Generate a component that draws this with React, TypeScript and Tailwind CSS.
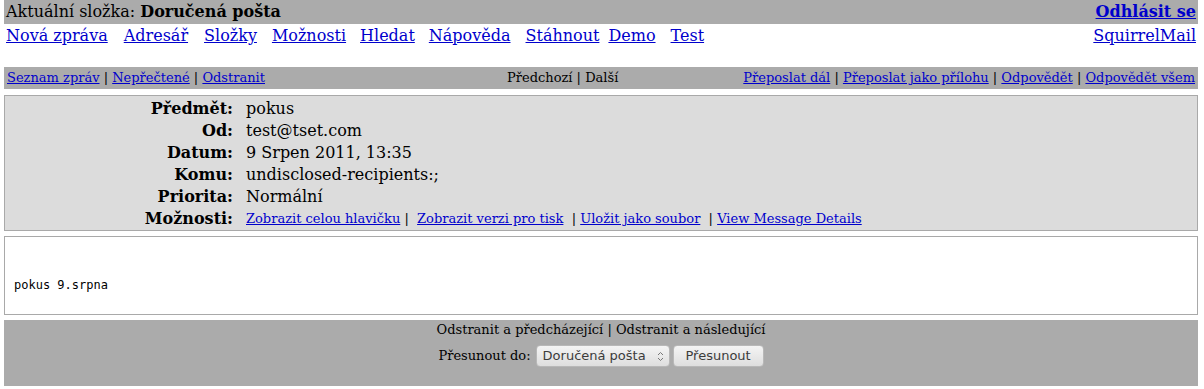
import React from 'react';

const link = 'text-[#0000cc] underline';

const topLinks: [string, string][] = [
  ['Nová zpráva', 'mr-[16px]'],
  ['Adresář', 'mr-[16px]'],
  ['Složky', 'mr-[15px]'],
  ['Možnosti', 'mr-[14px]'],
  ['Hledat', 'mr-[14px]'],
  ['Nápověda', 'mr-[15px]'],
  ['Stáhnout', 'mr-[9px]'],
  ['Demo', 'mr-[15px]'],
  ['Test', ''],
];

const headers: [string, string][] = [
  ['Předmět:', 'pokus'],
  ['Od:', 'test@tset.com'],
  ['Datum:', '9 Srpen 2011, 13:35'],
  ['Komu:', 'undisclosed-recipients:;'],
  ['Priorita:', 'Normální'],
];

function Sep({ text = ' | ' }: { text?: string }) {
  return <span className="whitespace-pre">{text}</span>;
}

export default function App() {
  return (
    <div className="w-[1204px] h-[389px] bg-white font-['DejaVu_Serif',serif] text-black">
      <div className="pl-[4px] w-[1198px]">
        {/* current folder bar */}
        <div className="flex h-[24px] items-center justify-between bg-[#ababab] px-[2px] text-[16px]">
          <span>
            Aktuální složka: <b>Doručená pošta</b>
          </span>
          <a className={`${link} font-bold`}>Odhlásit se</a>
        </div>

        {/* main menu */}
        <div className="flex h-[43px] items-start justify-between px-[2px] pt-[2px] text-[16px] leading-[19px]">
          <div className="flex">
            {topLinks.map(([t, m]) => (
              <a key={t} className={`${link} ${m}`}>
                {t}
              </a>
            ))}
          </div>
          <a className={link}>SquirrelMail</a>
        </div>

        {/* message nav bar */}
        <div className="flex h-[22px] items-center bg-[#ababab] px-[3px] text-[13px]">
          <div className="w-[500px]">
            <a className={link}>Seznam zpráv</a>
            <Sep />
            <a className={link}>Nepřečtené</a>
            <Sep />
            <a className={link}>Odstranit</a>
          </div>
          <div>
            Předchozí <Sep text="| " />
            Další
          </div>
          <div className="ml-auto">
            <a className={link}>Přeposlat dál</a>
            <Sep />
            <a className={link}>Přeposlat jako přílohu</a>
            <Sep />
            <a className={link}>Odpovědět</a>
            <Sep />
            <a className={link}>Odpovědět všem</a>
          </div>
        </div>

        {/* headers */}
        <div className="mt-[6px] border border-[#a9a9a9] bg-[#dcdcdc] pt-[2px] text-[16px]">
          {headers.map(([k, v]) => (
            <div key={k} className="flex h-[22px] items-center">
              <div className="w-[228px] text-right font-bold">{k}</div>
              <div className="pl-[13px]">{v}</div>
            </div>
          ))}
          <div className="flex h-[22px] items-center">
            <div className="w-[228px] text-right font-bold">Možnosti:</div>
            <div className="pl-[13px] text-[13px]">
              <a className={link}>Zobrazit celou hlavičku</a>
              <Sep text={'\u00a0|\u00a0\u00a0'} />
              <a className={link}>Zobrazit verzi pro tisk</a>
              <Sep text={'\u00a0\u00a0|\u00a0'} />
              <a className={link}>Uložit jako soubor</a>
              <Sep text={'\u00a0\u00a0|\u00a0'} />
              <a className={link}>View Message Details</a>
            </div>
          </div>
        </div>

        {/* body */}
        <div className="mt-[5px] h-[79px] border border-[#a9a9a9] bg-white px-[9px] pt-[41px] font-['DejaVu_Sans_Mono',monospace] text-[12px] leading-[14px]">
          pokus 9.srpna
        </div>

        {/* bottom bar */}
        <div className="mt-[5px] flex h-[66px] flex-col items-center bg-[#ababab] pt-[1px] text-[13px]">
          <div className="h-[18px] leading-[18px]">
            Odstranit a předcházející <Sep text="| " />
            Odstranit a následující
          </div>
          <div className="mt-[6px] flex items-center">
            <span className="mr-[5px]">Přesunout do:</span>
            <div className="flex h-[22px] w-[134px] items-center justify-between rounded-[4px] border border-[#b8b8b8] bg-gradient-to-b from-[#f4f4f4] to-[#dedede] pl-[6px] pr-[5px] font-['DejaVu_Sans',sans-serif] text-[13px] text-[#3c3c3c]">
              <span>Doručená pošta</span>
              <svg width="7" height="11" viewBox="0 0 7 11" className="text-[#777]">
                <path d="M1 4 L3.5 1.5 L6 4" fill="none" stroke="currentColor" strokeWidth="1" />
                <path d="M1 7 L3.5 9.5 L6 7" fill="none" stroke="currentColor" strokeWidth="1" />
              </svg>
            </div>
            <button className="ml-[3px] flex h-[22px] w-[91px] items-center justify-center rounded-[4px] border border-[#b8b8b8] bg-gradient-to-b from-[#f4f4f4] to-[#dedede] font-['DejaVu_Sans',sans-serif] text-[13px] text-[#3c3c3c]">
              Přesunout
            </button>
          </div>
        </div>
      </div>
    </div>
  );
}
